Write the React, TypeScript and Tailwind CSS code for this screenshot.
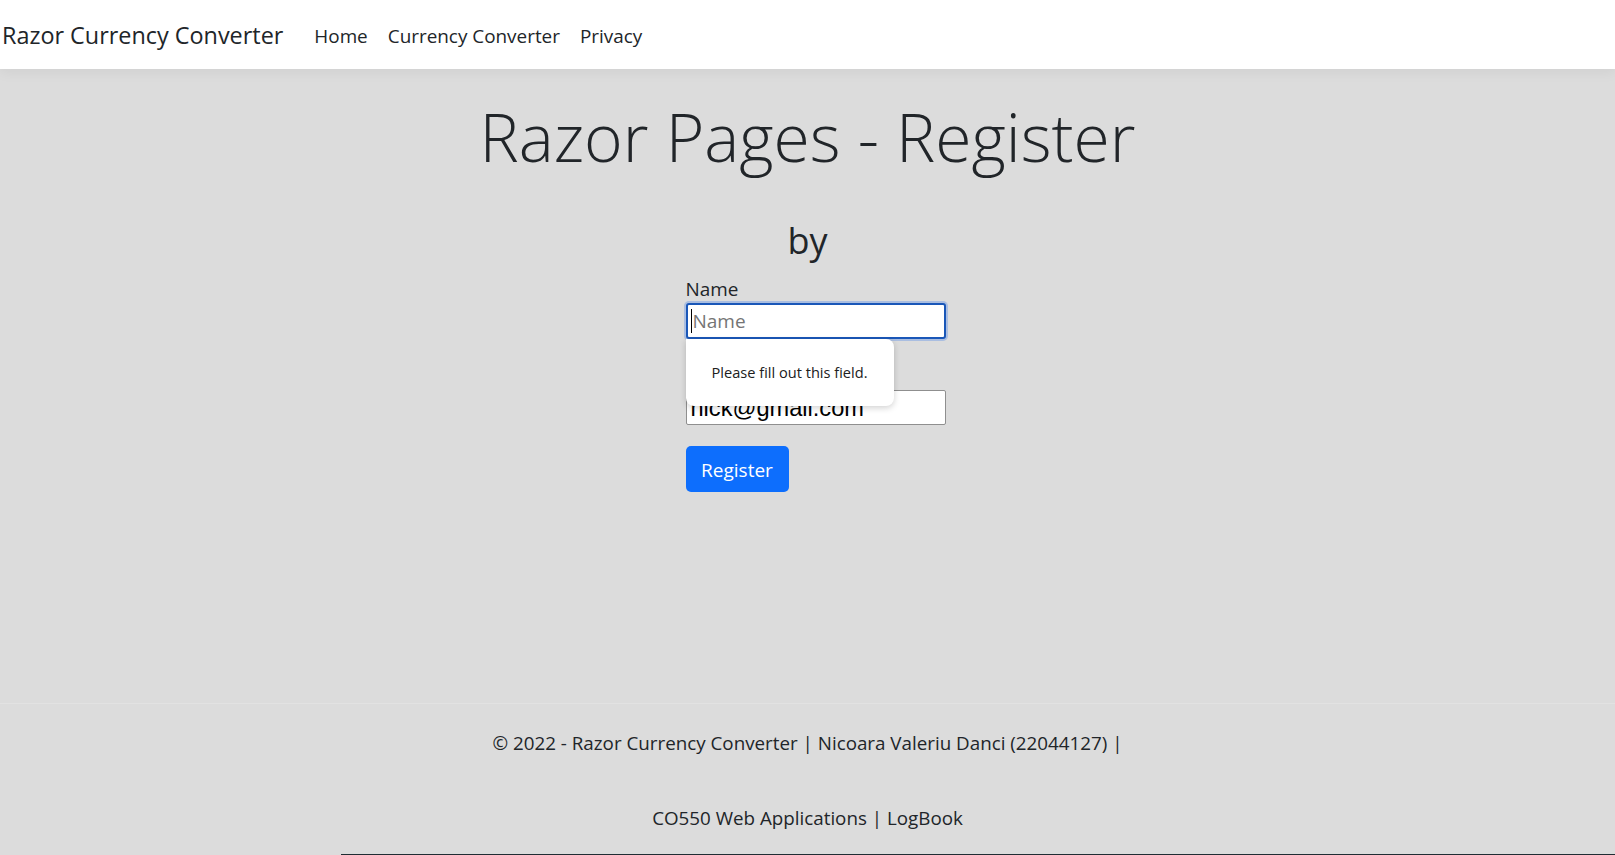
import React from "react";

export default function App() {
  const font = { fontFamily: '"Open Sans", "Noto Sans", sans-serif' };
  return (
    <div className="flex h-[855px] flex-col overflow-hidden bg-[#dcdcdc] text-[#212529]" style={font}>
      <header className="relative z-10 flex h-[69px] shrink-0 items-center bg-white pt-[3px] shadow-[0_4px_12px_rgba(0,0,0,0.05)]">
        <a className="pl-[2px] text-[23.4px] leading-none text-[#212529]">Razor Currency Converter</a>
        <nav className="ml-[31px] flex gap-[20px] text-[18.9px] text-[#212529]">
          <a>Home</a>
          <a>Currency Converter</a>
          <a>Privacy</a>
        </nav>
      </header>

      <main className="flex flex-1 flex-col items-center pt-[25px]">
        <h1 className="text-[66px] font-light leading-[84px]">Razor Pages - Register</h1>
        <h3 className="mt-[42px] text-[36px] leading-[42px]">by</h3>
        <form className="mt-[13px] ml-[16px] flex w-[260px] flex-col items-start">
          <div className="relative w-full">
            <label className="block text-[18.9px] leading-[28px]">Name</label>
            <div className="flex h-[36px] w-full items-center rounded-[3px] border-2 border-[#1a57b8] bg-white px-[3px] shadow-[0_0_0_2px_rgba(120,160,230,0.5)]">
              <span className="h-[24px] w-[1px] bg-black" />
              <span className="ml-[1px] text-[19px] text-[#757575]">Name</span>
            </div>
            <div className="absolute left-0 top-[64px] z-20 flex h-[67px] w-[208px] items-center justify-center rounded-[8px] rounded-tl-none bg-white text-[14.6px] text-[#202020] shadow-[0_2px_6px_rgba(0,0,0,0.18)]">
              Please fill out this field.
            </div>
          </div>
          <div className="mt-[21px] w-full">
            <label className="block text-[18.9px] leading-[30px]">Email</label>
            <div className="flex h-[35px] w-full items-center overflow-hidden rounded-[2px] border border-[#8f8f8f] bg-white px-[4px] pt-[3px]">
              <span className="text-[23.6px] text-black" style={{ fontFamily: '"Liberation Sans", Arial, sans-serif' }}>nick@gmail.com</span>
            </div>
          </div>
          <button type="button" className="mt-[21px] h-[46px] w-[103px] rounded-[5px] bg-[#0d6efd] pt-[2px] text-[19px] text-white">
            Register
          </button>
        </form>
      </main>

      <footer className="h-[151px] shrink-0 overflow-hidden border-t border-[#e2e2e2] pt-[2px] text-center text-[18.8px] leading-[75px]">
        <div>© 2022 - Razor Currency Converter | Nicoara Valeriu Danci (22044127) |</div>
        <div>CO550 Web Applications | LogBook</div>
      </footer>
      <div className="ml-[341px] h-[1px] shrink-0 bg-[#1f2d33]" />
    </div>
  );
}
